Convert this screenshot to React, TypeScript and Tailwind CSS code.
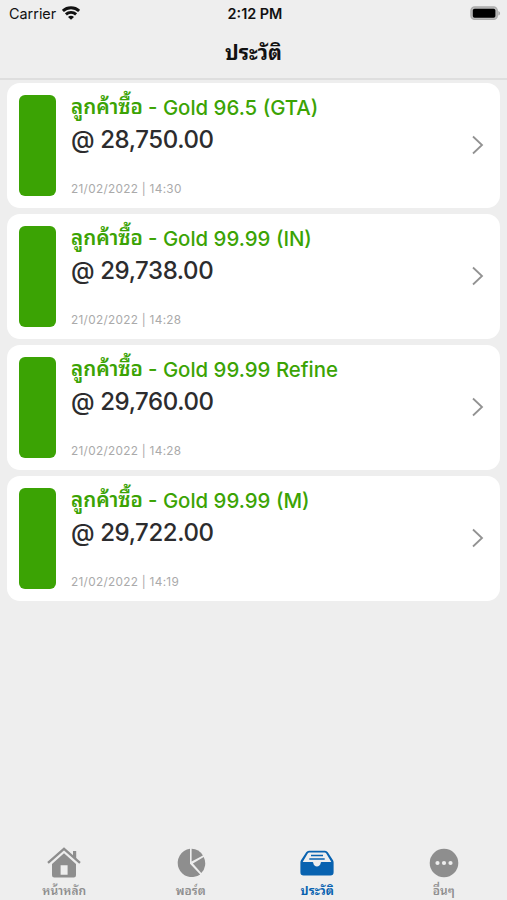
import { ReactNode } from 'react'

const transactions = [
  { product: 'Gold 96.5 (GTA)', price: '28,750.00', time: '21/02/2022 | 14:30' },
  { product: 'Gold 99.99 (IN)', price: '29,738.00', time: '21/02/2022 | 14:28' },
  { product: 'Gold 99.99 Refine', price: '29,760.00', time: '21/02/2022 | 14:28' },
  { product: 'Gold 99.99 (M)', price: '29,722.00', time: '21/02/2022 | 14:19' },
]

function WifiIcon() {
  return (
    <svg className="w-[18px] h-[14px]" viewBox="0 0 18 14" fill="none" stroke="#111" strokeWidth="2.9">
      <path d="M.9 4.9C5.4.7 12.6.7 17.1 4.9" />
      <path d="M3.9 8.4c2.9-2.7 7.3-2.7 10.2 0" />
      <path d="M9 13.8 6 10.9c1.7-1.5 4.3-1.5 6 0Z" fill="#111" stroke="none" />
    </svg>
  )
}

function BatteryIcon() {
  return (
    <svg className="w-[31px] h-[15px]" viewBox="0 0 31 15">
      <rect x=".9" y=".9" width="26.4" height="12.6" rx="3.8" fill="#b9b9b9" stroke="#aaa" strokeWidth="1.2" />
      <rect x="2.8" y="2.7" width="22.6" height="9" rx="1.8" fill="#000" />
      <path d="M28.3 5v4.6c2.4-.8 2.4-3.8 0-4.6Z" fill="#aaa" />
    </svg>
  )
}

function HomeIcon() {
  return (
    <svg className="w-[34px] h-[32px]" viewBox="0 0 34 32">
      <path d="M1 15.9 17 1.9l16 14" fill="none" stroke="#8e8e8e" strokeWidth="2.3" />
      <path d="M26 4h3.2v8.6L26 9.8Z" fill="#8e8e8e" />
      <path
        d="M5 16.9 17 6.3l12 10.6v11.3a2.3 2.3 0 0 1-2.3 2.3H7.3A2.3 2.3 0 0 1 5 28.2ZM13.6 18.2v9.6h7v-9.6Z"
        fill="#8e8e8e"
        fillRule="evenodd"
      />
    </svg>
  )
}

function PieIcon() {
  return (
    <svg className="w-[30px] h-[30px]" viewBox="0 0 30 30" fill="#8e8e8e">
      <path d="M14 .8v14.9l10.2 10.7A14.2 14.2 0 1 1 14 .8Z" />
      <path d="M15.6.8a14.2 14.2 0 0 1 11.3 6.6L15.6 13.6Z" />
      <path d="M27.7 8.9a14.2 14.2 0 0 1-2.4 16.2l-8.4-9.6Z" />
    </svg>
  )
}

function InboxIcon() {
  return (
    <svg className="w-[34px] h-[26px]" viewBox="0 0 34 26">
      <path d="M9 .8h16q1.8 0 2.8 1.5l5.2 8q.6 1 .6 2.2v9.7a3.2 3.2 0 0 1-3.2 3.2H3.6A3.2 3.2 0 0 1 .4 22.2v-9.7q0-1.2.6-2.2l5.2-8Q7.2.8 9 .8Z" fill="#0862b0" />
      <path d="M9.4 2.6h15.2q1.1 0 1.7.9l5 8.6h-9.5c-.7 0-1 .4-1.1 1-.5 4.5-7 4.5-7.4 0-.1-.6-.4-1-1.1-1H2.7l5-8.6q.6-.9 1.7-.9Z" fill="#eee" />
      <path d="M11 5.6h12M9.3 8.9h15.4" stroke="#0862b0" strokeWidth="1.5" />
    </svg>
  )
}

function MoreIcon() {
  return (
    <svg className="w-[30px] h-[30px]" viewBox="0 0 30 30">
      <circle cx="15" cy="15" r="14.3" fill="#8e8e8e" />
      <g fill="#eee">
        <circle cx="8.5" cy="15" r="2.1" />
        <circle cx="15" cy="15" r="2.1" />
        <circle cx="21.5" cy="15" r="2.1" />
      </g>
    </svg>
  )
}

function Tab({ icon, label, active }: { icon: ReactNode; label: string; active?: boolean }) {
  return (
    <div className={`flex flex-1 flex-col items-center ${active ? 'text-[#0862b0] font-bold' : 'text-[#8e8e8e] font-semibold'}`}>
      <div className="flex h-[34px] items-center">{icon}</div>
      <span className="mt-[2px] text-[12px] leading-[18px] whitespace-nowrap">{label}</span>
    </div>
  )
}

export default function App() {
  return (
    <div className="flex h-[900px] w-[507px] flex-col overflow-hidden bg-[#eee] font-['Inter','Noto_Sans_Thai_Looped','Loma','Noto_Sans_Thai',sans-serif]">
      {/* Status bar */}
      <div className="grid h-[27px] shrink-0 grid-cols-3 items-center pl-[9px] pr-[6px] text-[14.4px] text-[#111]">
        <div className="flex items-center gap-[6px]">
          <span>Carrier</span>
          <WifiIcon />
        </div>
        <span className="text-center font-semibold">2:12 PM</span>
        <div className="flex justify-end">
          <BatteryIcon />
        </div>
      </div>

      {/* Header */}
      <header className="flex h-[53px] shrink-0 items-center justify-center border-b-2 border-[#dedede] pt-[2px]">
        <h1 className="text-[20.5px] font-bold text-[#111]">ประวัติ</h1>
      </header>

      {/* Transactions */}
      <main className="flex flex-1 flex-col gap-[6px] px-[7px] pt-[2.5px]">
        {transactions.map((item) => (
          <div key={item.product} className="flex h-[125px] shrink-0 items-center rounded-[13px] bg-white pl-[12px] pr-[16px]">
            <div className="h-[101px] w-[37px] rounded-[6px] bg-[#3ba304]" />
            <div className="ml-[15px] flex h-full flex-1 flex-col">
              <div className="mt-[10px] flex h-[30px] items-center whitespace-nowrap text-[#3ba304]">
                <span className="w-[71px] text-[20.5px] font-semibold">ลูกค้าซื้อ</span>
                <span className="ml-[6px] pt-px text-[20.4px] font-medium">- {item.product}</span>
              </div>
              <div className="mt-px flex h-[32px] items-center text-[24px] font-medium tracking-[-0.4px] text-[#2c2c2e]">@ {item.price}</div>
              <div className="mt-[24px] text-[11.8px] leading-[18px] tracking-[0.3px] text-[#aaa]">{item.time}</div>
            </div>
            <svg className="h-[20px] w-[12px]" viewBox="0 0 12 20" fill="none" stroke="#929292" strokeWidth="1.8">
              <path d="m1 1.5 9 8.5-9 8.5" />
            </svg>
          </div>
        ))}
      </main>

      {/* Tab bar */}
      <nav className="flex h-[54px] shrink-0 pl-px">
        <Tab icon={<HomeIcon />} label="หน้าหลัก" />
        <Tab icon={<PieIcon />} label="พอร์ต" />
        <Tab icon={<InboxIcon />} label="ประวัติ" active />
        <Tab icon={<MoreIcon />} label="อื่นๆ" />
      </nav>
    </div>
  )
}
